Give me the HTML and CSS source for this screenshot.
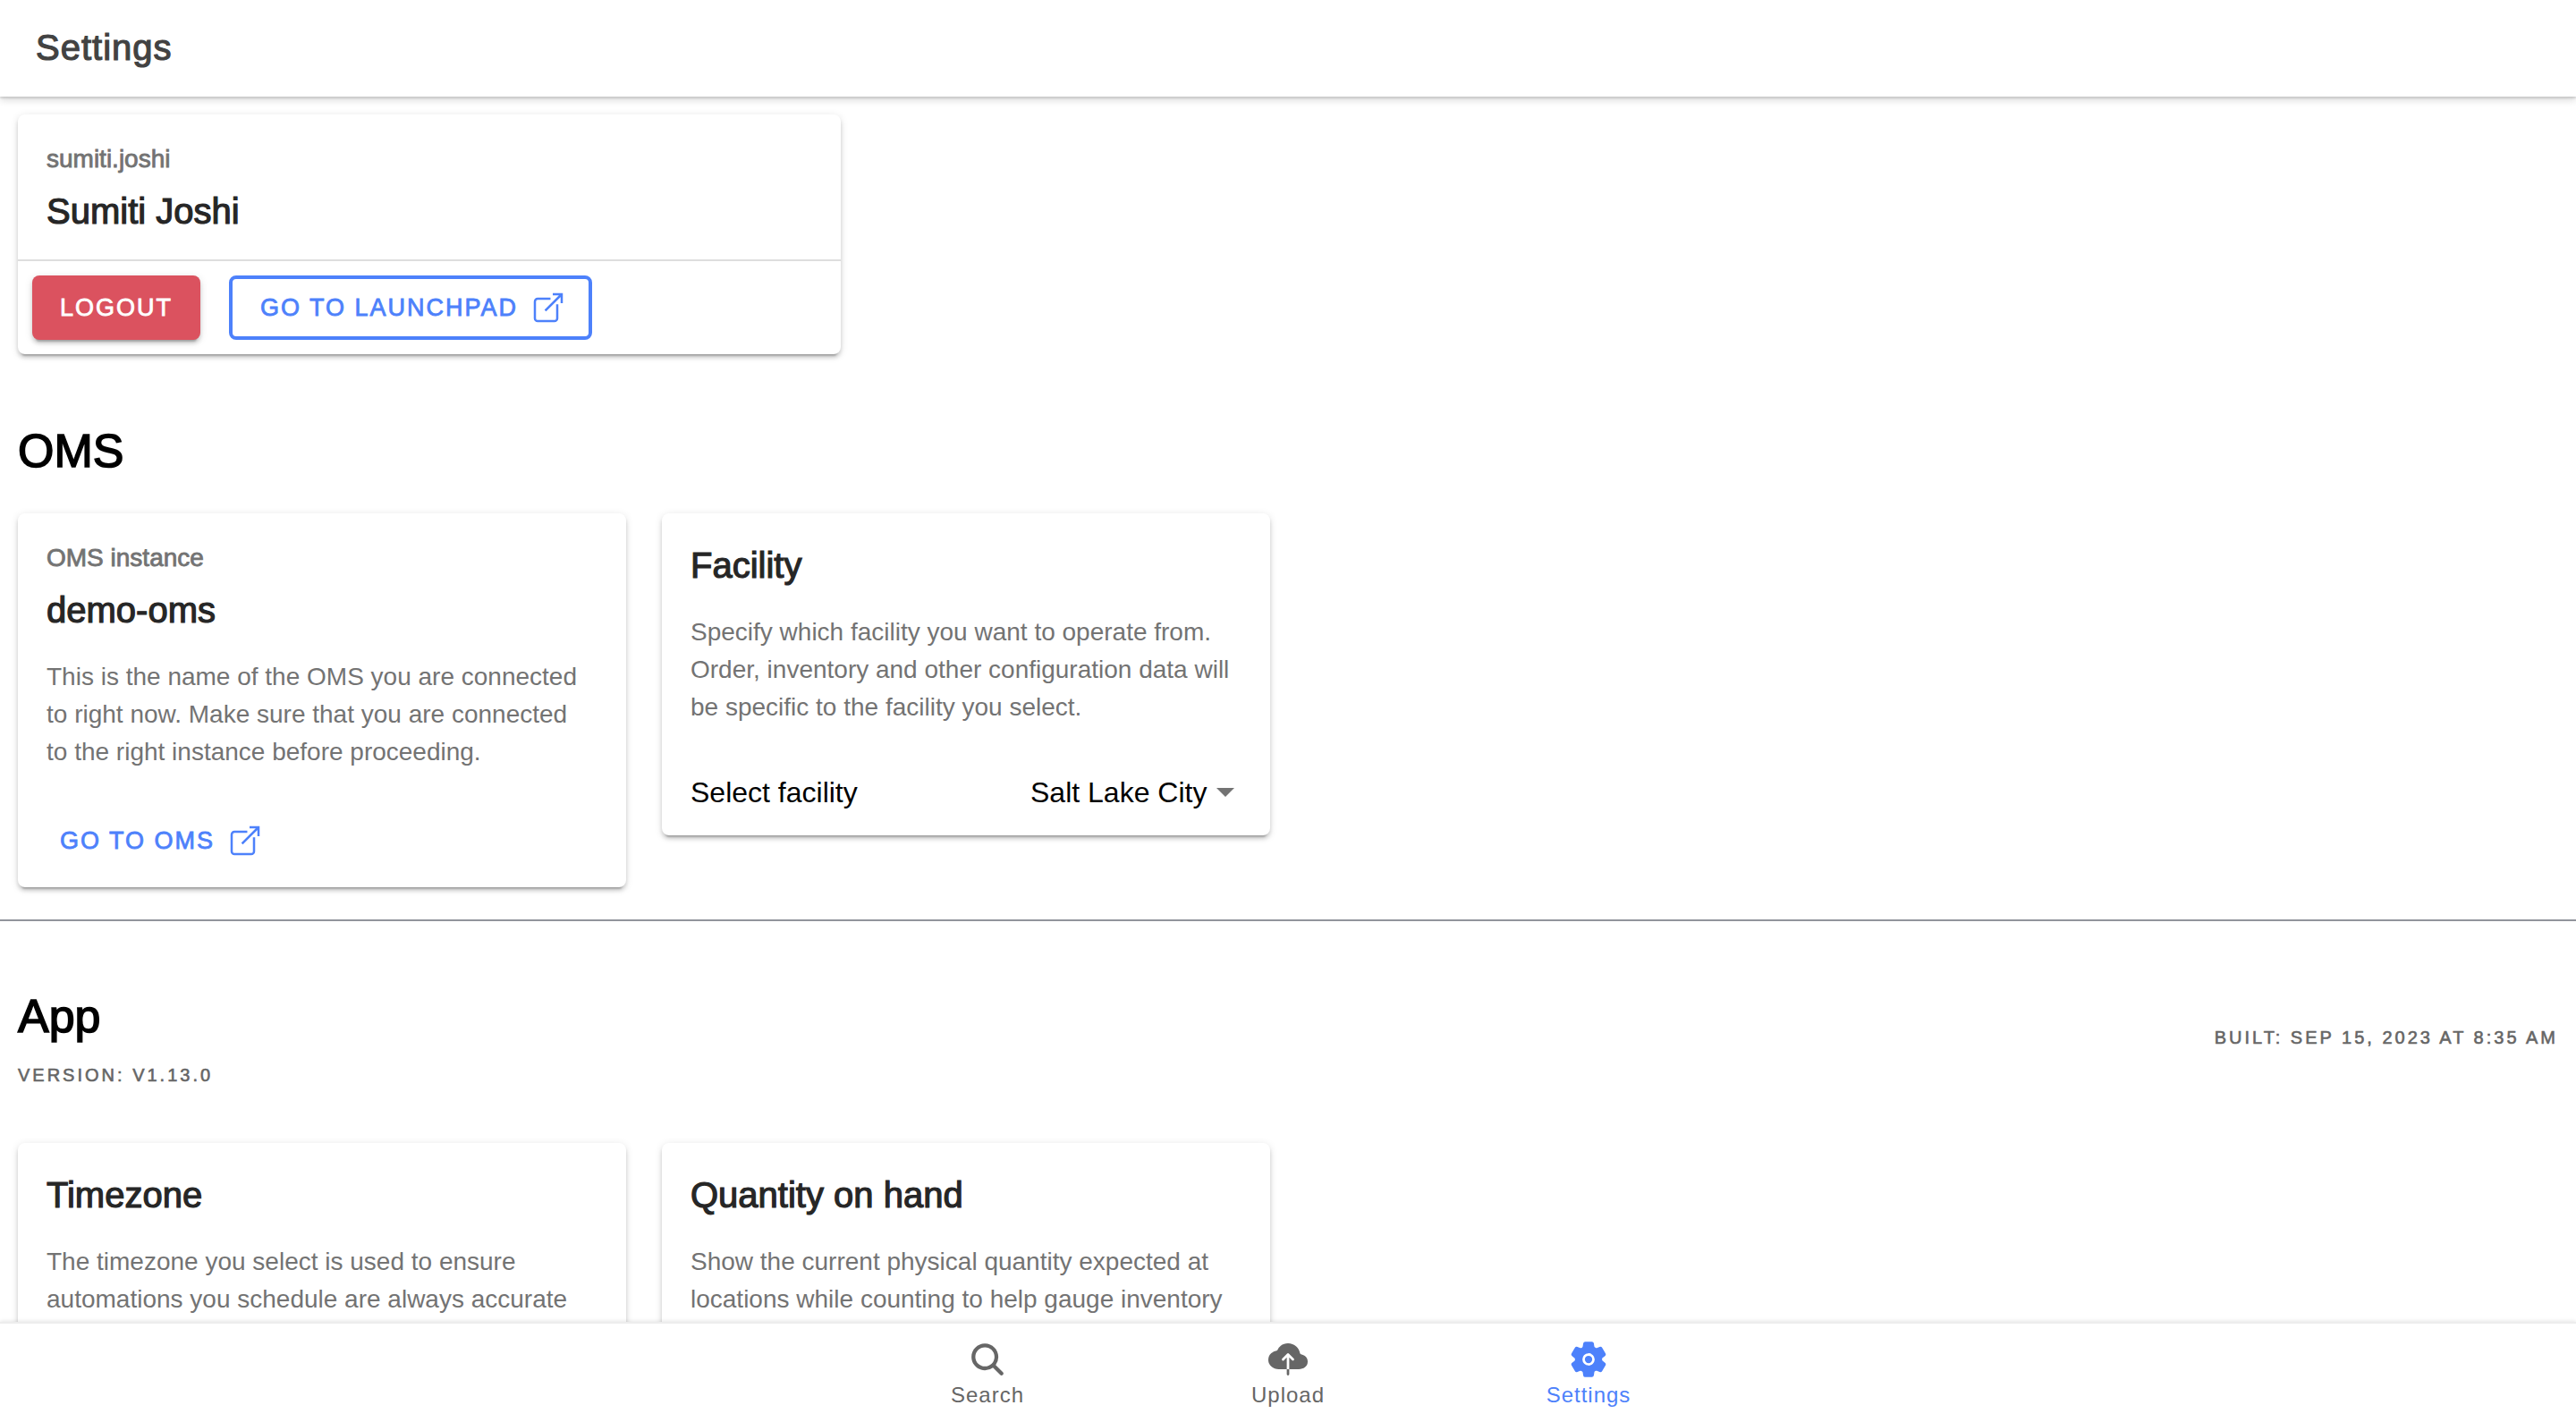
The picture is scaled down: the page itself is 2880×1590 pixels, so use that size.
FILE: index.html
```html
<!DOCTYPE html>
<html lang="en">
<head>
<meta charset="utf-8">
<meta name="viewport" content="width=device-width, initial-scale=1">
<title>Settings</title>
<link rel="stylesheet" href="styles.css">
</head>
<body>
<svg class="sprite" aria-hidden="true">
  <symbol id="icon-open" viewBox="0 0 512 512"><path fill="none" stroke="currentColor" stroke-width="32" stroke-linecap="square" stroke-linejoin="miter" d="M384 224v184a40 40 0 01-40 40H104a40 40 0 01-40-40V168a40 40 0 0140-40h167.480M336 64h112v112M224 288L440 72"/></symbol>
</svg>
<header class="toolbar"><h1 class="toolbar-title">Settings</h1></header>

<main class="content">
  <section class="grid grid-profile">
    <article class="card">
      <div class="card-header">
        <p class="card-subtitle">sumiti.joshi</p>
        <h2 class="card-title">Sumiti Joshi</h2>
      </div>
      <div class="card-actions">
        <button class="button button-danger" type="button">LOGOUT</button>
        <button class="button button-outline" type="button">GO TO LAUNCHPAD <svg class="button-icon" aria-hidden="true"><use href="#icon-open"/></svg></button>
      </div>
    </article>
  </section>

  <div class="section-header"><h1 class="section-title">OMS</h1></div>
  <section class="grid">
    <article class="card">
      <div class="card-header">
        <p class="card-subtitle">OMS instance</p>
        <h2 class="card-title">demo-oms</h2>
      </div>
      <p class="card-text">This is the name of the OMS you are connected to right now. Make sure that you are connected to the right instance before proceeding.</p>
      <div class="card-link"><button class="button button-clear" type="button">GO TO OMS <svg class="button-icon" aria-hidden="true"><use href="#icon-open"/></svg></button></div>
    </article>
    <article class="card">
      <div class="card-header"><h2 class="card-title">Facility</h2></div>
      <p class="card-text">Specify which facility you want to operate from. Order, inventory and other configuration data will be specific to the facility you select.</p>
      <div class="field">
        <label for="facility">Select facility</label>
        <span class="select-wrap">
          <select id="facility" class="select"><option>Salt Lake City</option></select>
          <span class="caret"></span>
        </span>
      </div>
    </article>
  </section>

  <hr class="divider">

  <div class="section-header section-header-app">
    <div>
      <h1 class="section-title">App</h1>
      <p class="overline">VERSION: V1.13.0</p>
    </div>
    <p class="overline">BUILT: SEP 15, 2023 AT 8:35 AM</p>
  </div>
  <section class="grid">
    <article class="card">
      <div class="card-header"><h2 class="card-title">Timezone</h2></div>
      <p class="card-text">The timezone you select is used to ensure automations you schedule are always accurate</p>
    </article>
    <article class="card">
      <div class="card-header"><h2 class="card-title">Quantity on hand</h2></div>
      <p class="card-text">Show the current physical quantity expected at locations while counting to help gauge inventory</p>
    </article>
  </section>
</main>

<nav class="tabs" aria-label="Main">
  <a class="tab" href="#search">
    <svg class="tab-icon" viewBox="0 0 512 512" aria-hidden="true"><path d="M456.690 421.390L362.600 327.300a173.810 173.810 0 0034.840-104.580C397.440 126.380 319.060 48 222.720 48S48 126.380 48 222.720s78.380 174.720 174.720 174.720A173.810 173.810 0 00327.300 362.600l94.090 94.090a25 25 0 0035.300-35.300zM97.920 222.720a124.800 124.800 0 11124.800 124.800 124.950 124.950 0 01-124.800-124.800z"/></svg>
    Search
  </a>
  <a class="tab" href="#upload">
    <svg class="tab-icon" viewBox="0 0 512 512" aria-hidden="true"><path d="M473.660 210c-14-10.380-31.200-18-49.360-22.110a16.110 16.110 0 01-12.190-12.220c-7.800-34.750-24.590-64.550-49.270-87.130C334.150 62.250 296.210 47.790 256 47.790c-35.350 0-68 11.080-94.370 32.050a150.070 150.070 0 00-42.060 53 16 16 0 01-11.310 8.870c-26.750 5.400-50.900 16.870-69.340 33.120C13.460 197.330 0 227.240 0 261.390c0 34.520 14.490 66 40.790 88.760 25.120 21.690 58.940 33.640 95.210 33.640h104V230.420l-36.690 36.690a16 16 0 01-23.160-.56c-5.800-6.370-5.240-16.300.85-22.390l63.690-63.680a16 16 0 0122.620 0L331 244.140c6.280 6.290 6.640 16.600.39 22.910a16 16 0 01-22.680.06L272 230.420v153.370h124c31.340 0 59.910-8.800 80.450-24.770 23.260-18.100 35.550-44 35.550-74.830 0-29.940-13.260-55.610-38.340-74.190zM240 448.210a16 16 0 1032 0v-64.420h-32z"/></svg>
    Upload
  </a>
  <a class="tab tab-active" href="#settings" aria-current="page">
    <svg class="tab-icon" viewBox="0 0 512 512" aria-hidden="true"><circle cx="256" cy="256" r="48"/><path d="M470.390 300l-.47-.38-31.560-24.750a16.110 16.110 0 01-6.100-13.330v-11.560a16 16 0 016.110-13.220L469.920 212l.47-.38a26.680 26.680 0 005.900-34.060l-42.710-73.900a1.590 1.590 0 01-.13-.22A26.860 26.860 0 00401 92.140l-.35.13-37.100 14.930a15.940 15.940 0 01-14.470-1.290q-4.920-3.100-10-5.860a15.940 15.940 0 01-8.190-11.820l-5.590-39.590-.12-.72A27.220 27.220 0 00298.760 26h-85.520a26.920 26.920 0 00-26.450 22.390l-.09.56-5.570 39.670a16 16 0 01-8.130 11.820 175.210 175.210 0 00-10 5.820 15.920 15.920 0 01-14.430 1.270l-37.130-15-.35-.14a26.870 26.870 0 00-32.480 11.340l-.13.22-42.770 73.950a26.710 26.710 0 005.900 34.100l.47.38 31.560 24.750a16.110 16.110 0 016.100 13.330v11.560a16 16 0 01-6.110 13.220L42.080 300l-.47.38a26.680 26.680 0 00-5.900 34.060l42.710 73.900a1.590 1.590 0 01.13.22 26.860 26.860 0 0032.450 11.300l.35-.13 37.070-14.930a15.940 15.940 0 0114.470 1.290q4.920 3.110 10 5.860a15.940 15.940 0 018.190 11.820l5.560 39.590.12.72A27.220 27.220 0 00213.240 486h85.520a26.920 26.920 0 0026.450-22.390l.09-.56 5.570-39.670a16 16 0 018.180-11.820c3.420-1.840 6.760-3.790 10-5.820a15.920 15.920 0 0114.430-1.270l37.130 14.950.35.14a26.850 26.850 0 0032.480-11.340 2.530 2.530 0 01.13-.22l42.710-73.890a26.700 26.700 0 00-5.890-34.110zm-134.480-40.240a80 80 0 11-83.660-83.670 80.210 80.210 0 0183.660 83.670z"/></svg>
    Settings
  </a>
</nav>
</body>
</html>
```
FILE: styles.css
```css
:root {
  --primary: #4d81fb;
  --danger: #db525f;
  --muted: #737373;
  --heading: #262626;
}

* { box-sizing: border-box; }

body {
  margin: 0;
  height: 100vh;
  display: flex;
  flex-direction: column;
  overflow: hidden;
  background: #fff;
  color: #000;
  font-family: "Liberation Sans", Arial, Helvetica, sans-serif;
  font-size: 28px;
}

h1, h2, p { margin: 0; font-weight: 400; }

.sprite { display: none; }

/* Medium weight for titles, labels and buttons */
.toolbar-title, .card-subtitle, .card-title, .section-title, .button, .overline {
  -webkit-text-stroke: 0.03em currentColor;
}

.toolbar {
  flex: none;
  height: 108px;
  padding: 0 40px 2px;
  display: flex;
  align-items: center;
  background: #fff;
  box-shadow: 0 2px 2px rgba(0, 0, 0, .12), 0 4px 8px rgba(0, 0, 0, .14);
  z-index: 1;
}
.toolbar-title { font-size: 40px; line-height: 48px; letter-spacing: 1px; color: #424242; }

.content { flex: 1; min-height: 0; overflow: hidden; }

.grid {
  display: grid;
  grid-template-columns: repeat(4, 1fr);
  gap: 40px;
  align-items: start;
  padding: 0 20px;
}
.grid-profile { grid-template-columns: repeat(3, 1fr); padding-top: 20px; }

.card {
  border-radius: 8px;
  background: #fff;
  box-shadow: 0 6px 2px -4px rgba(0, 0, 0, .2), 0 4px 4px rgba(0, 0, 0, .14), 0 2px 10px rgba(0, 0, 0, .12);
}
.card-header { padding: 32px 32px 28px; }
.card-subtitle { font-size: 28px; line-height: 36px; margin-bottom: 14px; color: var(--muted); }
.card-title { font-size: 40px; line-height: 52px; color: var(--heading); }
.card-text { padding: 0 40px 26px 32px; font-size: 28px; line-height: 42px; color: var(--muted); }

.card-actions {
  display: flex;
  gap: 32px;
  padding: 16px;
  border-top: 2px solid #dedede;
}
.button {
  display: flex;
  align-items: center;
  height: 72px;
  padding: 0 31px;
  border: 0;
  border-radius: 8px;
  background: none;
  font: inherit;
  font-size: 27px;
  letter-spacing: 2px;
  color: var(--primary);
  white-space: nowrap;
}
.button-danger {
  background: var(--danger);
  color: #fff;
  box-shadow: 0 6px 2px -4px rgba(0, 0, 0, .2), 0 4px 4px rgba(0, 0, 0, .14), 0 2px 10px rgba(0, 0, 0, .12);
}
.button-outline { border: 4px solid var(--primary); }
.button-clear { padding: 0 15px; }
.button-icon { width: 40px; height: 40px; margin: 0 -6px 0 14px; }
.card-link { padding: 16px 32px; }

.field {
  display: flex;
  justify-content: space-between;
  align-items: center;
  height: 96px;
  padding: 0 40px 0 32px;
  font-size: 32px;
}
.select-wrap { display: flex; align-items: center; gap: 10px; }
.select {
  appearance: none;
  padding: 0;
  border: 0;
  background: none;
  font: inherit;
  color: inherit;
}
.caret {
  border: 10px solid transparent;
  border-top-color: #737373;
  border-bottom: 0;
}

.section-header { padding: 78px 20px 40px; }
.section-title { font-size: 52px; line-height: 60px; }
.section-header-app {
  display: flex;
  justify-content: space-between;
  align-items: center;
  padding: 76px 20px 64px;
}
.overline { font-size: 20px; line-height: 24px; letter-spacing: 3px; color: #666; }
.section-title + .overline { margin-top: 24px; }
.divider { height: 2px; margin: 36px 0 0; border: 0; background: #92949c; }

.tabs {
  flex: none;
  display: flex;
  justify-content: center;
  height: 112px;
  border-top: 2px solid #ededed;
  background: #fff;
  box-shadow: 0 -1px 4px rgba(0, 0, 0, .1);
  z-index: 1;
}
.tab {
  width: 336px;
  display: flex;
  flex-direction: column;
  align-items: center;
  gap: 2px;
  padding-top: 18px;
  color: #666;
  font-size: 24px;
  line-height: 32px;
  letter-spacing: 1px;
  text-decoration: none;
}
.tab-active { color: var(--primary); }
.tab-icon { width: 44px; height: 44px; fill: currentColor; }
```
